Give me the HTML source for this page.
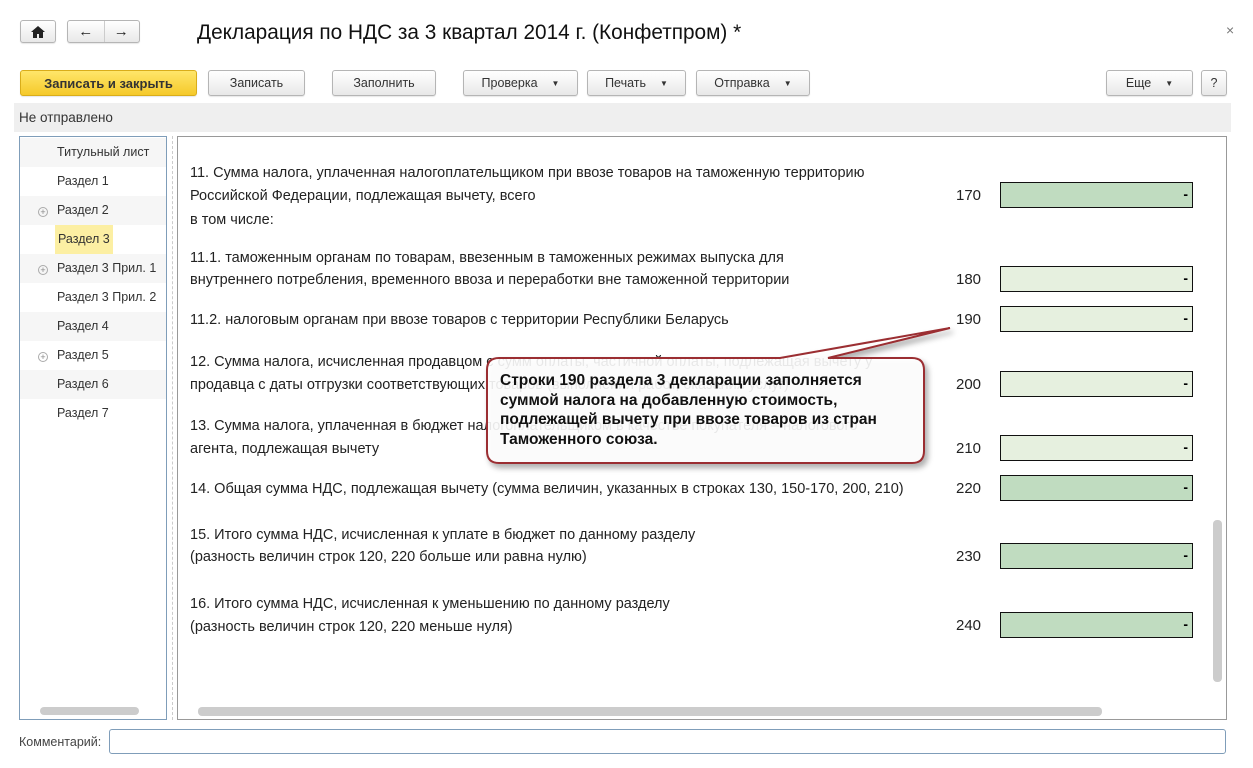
<!DOCTYPE html>
<html><head><meta charset="utf-8"><style>
*{box-sizing:border-box;margin:0;padding:0}
body{width:1253px;height:768px;background:#fff;font-family:"Liberation Sans",Arial,sans-serif;color:#333;position:relative;overflow:hidden}
.a{position:absolute}
.btn{position:absolute;height:26px;border:1px solid #b5b5b5;border-radius:3px;background:linear-gradient(#fff,#e8e8e8);font-size:12.5px;color:#333;display:flex;align-items:center;justify-content:center;box-shadow:0 1px 1px rgba(0,0,0,.1)}
.tri{font-size:8px;margin-left:14px}
.t{position:absolute;font-size:14.5px;color:#222;white-space:nowrap}
.n{position:absolute;left:956px;font-size:15px;color:#222}
.f{position:absolute;left:1000px;width:193px;height:26px;border:1px solid #111;text-align:right;padding-right:4px;font-weight:bold;font-size:14px;line-height:22px;color:#000}
.d{background:#c0dcc0}.l{background:#e6f0df}
.li{position:absolute;left:20px;width:146px;height:29px;font-size:12.5px;color:#333;line-height:29px;padding-left:37px}
.pl{position:absolute;left:18px;top:11px;width:10px;height:10px;border:1px solid #aaa;border-radius:50%;font-size:9px;line-height:8px;text-align:center;color:#888;padding:0}
</style></head><body>
<div class="btn" style="left:20px;top:20px;width:36px;height:23px"><svg width="14" height="12" viewBox="0 0 14 12"><path d="M7 0L0 6h2v6h4V8h2v4h4V6h2z" fill="#222"/></svg></div>
<div class="btn" style="left:67px;top:20px;width:73px;height:23px;justify-content:space-around"><span style="font-size:15px;font-weight:bold;color:#222">&#8592;</span><span style="position:absolute;left:36px;top:0;bottom:0;border-left:1px solid #ccc"></span><span style="font-size:15px;font-weight:bold;color:#222">&#8594;</span></div>
<div class="a" style="left:197px;top:21px;font-size:20.8px;color:#111">Декларация по НДС за 3 квартал 2014 г. (Конфетпром) *</div>
<div class="a" style="left:1226px;top:22px;font-size:14px;color:#777">×</div>
<div class="btn" style="left:20px;top:70px;width:177px;background:linear-gradient(#ffe66a,#f5c92a);border-color:#d9ad1a;font-weight:bold;color:#333;font-size:13px">Записать и закрыть</div>
<div class="btn" style="left:208px;top:70px;width:97px">Записать</div>
<div class="btn" style="left:332px;top:70px;width:104px">Заполнить</div>
<div class="btn" style="left:463px;top:70px;width:115px">Проверка<span class="tri">▼</span></div>
<div class="btn" style="left:587px;top:70px;width:99px">Печать<span class="tri">▼</span></div>
<div class="btn" style="left:696px;top:70px;width:114px">Отправка<span class="tri">▼</span></div>
<div class="btn" style="left:1106px;top:70px;width:87px">Еще<span class="tri">▼</span></div>
<div class="btn" style="left:1201px;top:70px;width:26px">?</div>
<div class="a" style="left:14px;top:103px;width:1217px;height:29px;background:#efefef;font-size:13.5px;line-height:29px;padding-left:5px;color:#333">Не отправлено</div>

<div class="a" style="left:19px;top:136px;width:148px;height:584px;border:1px solid #7f9db9"></div>
<div class="li" style="top:138px;background:#f6f6f6">Титульный лист</div>
<div class="li" style="top:167px">Раздел 1</div>
<div class="li" style="top:196px;background:#f6f6f6"><span class="pl">+</span>Раздел 2</div>
<div class="li" style="top:225px;padding-left:0"><span style="display:inline-block;margin-left:35px;background:#fcefa3;padding:0 3px">Раздел 3</span></div>
<div class="li" style="top:254px;background:#f6f6f6"><span class="pl">+</span>Раздел 3 Прил. 1</div>
<div class="li" style="top:283px">Раздел 3 Прил. 2</div>
<div class="li" style="top:312px;background:#f6f6f6">Раздел 4</div>
<div class="li" style="top:341px"><span class="pl">+</span>Раздел 5</div>
<div class="li" style="top:370px;background:#f6f6f6">Раздел 6</div>
<div class="li" style="top:399px">Раздел 7</div>
<div class="a" style="left:40px;top:707px;width:99px;height:8px;border-radius:4px;background:#ccc"></div>
<div class="a" style="left:172px;top:136px;height:584px;border-left:1px dashed #ccc"></div>

<div class="a" style="left:177px;top:136px;width:1050px;height:584px;border:1px solid #999"></div>
<div class="a" style="left:198px;top:707px;width:904px;height:9px;border-radius:4px;background:#ccc"></div>
<div class="a" style="left:1213px;top:520px;width:9px;height:162px;border-radius:4px;background:#ccc"></div>

<div class="t" style="left:190px;top:165px">11. Сумма налога, уплаченная налогоплательщиком при ввозе товаров на таможенную территорию</div>
<div class="t" style="left:190px;top:188px">Российской Федерации, подлежащая вычету, всего</div>
<div class="t" style="left:190px;top:212px">в том числе:</div>
<div class="t" style="left:190px;top:250px">11.1. таможенным органам по товарам, ввезенным в таможенных режимах выпуска для</div>
<div class="t" style="left:190px;top:272px">внутреннего потребления, временного ввоза и переработки вне таможенной территории</div>
<div class="t" style="left:190px;top:312px">11.2. налоговым органам при ввозе товаров с территории Республики Беларусь</div>
<div class="t" style="left:190px;top:354px">12. Сумма налога, исчисленная продавцом с сумм оплаты, частичной оплаты, подлежащая вычету у</div>
<div class="t" style="left:190px;top:377px">продавца с даты отгрузки соответствующих товаров (выполнения работ, оказания услуг)</div>
<div class="t" style="left:190px;top:418px">13. Сумма налога, уплаченная в бюджет налогоплательщиком в качестве покупателя – налогового</div>
<div class="t" style="left:190px;top:441px">агента, подлежащая вычету</div>
<div class="t" style="left:190px;top:481px">14. Общая сумма НДС, подлежащая вычету (сумма величин, указанных в строках 130, 150-170, 200, 210)</div>
<div class="t" style="left:190px;top:527px">15. Итого сумма НДС, исчисленная к уплате в бюджет по данному разделу</div>
<div class="t" style="left:190px;top:549px">(разность величин строк 120, 220 больше или равна нулю)</div>
<div class="t" style="left:190px;top:596px">16. Итого сумма НДС, исчисленная к уменьшению по данному разделу</div>
<div class="t" style="left:190px;top:619px">(разность величин строк 120, 220 меньше нуля)</div>

<div class="n" style="top:187px">170</div><div class="f d" style="top:182px">-</div>
<div class="n" style="top:271px">180</div><div class="f l" style="top:266px">-</div>
<div class="n" style="top:311px">190</div><div class="f l" style="top:306px">-</div>
<div class="n" style="top:376px">200</div><div class="f l" style="top:371px">-</div>
<div class="n" style="top:440px">210</div><div class="f l" style="top:435px">-</div>
<div class="n" style="top:480px">220</div><div class="f d" style="top:475px">-</div>
<div class="n" style="top:548px">230</div><div class="f d" style="top:543px">-</div>
<div class="n" style="top:617px">240</div><div class="f d" style="top:612px">-</div>

<svg class="a" style="left:0;top:0" width="1253" height="768">
<defs><filter id="s" x="-10%" y="-10%" width="130%" height="140%"><feDropShadow dx="3" dy="4" stdDeviation="3" flood-opacity="0.35"/></filter></defs>
<path d="M499 358 H780 L950 328 L828 358 H912 Q924 358 924 370 V451 Q924 463 912 463 H499 Q487 463 487 451 V370 Q487 358 499 358Z" fill="rgba(255,255,255,0.88)" stroke="#9b2d30" stroke-width="2" filter="url(#s)"/>
</svg>
<div class="a" style="left:500px;top:371px;font-size:15.5px;font-weight:bold;color:#111;line-height:19.5px;white-space:nowrap">Строки 190 раздела 3 декларации заполняется<br>суммой налога на добавленную стоимость,<br>подлежащей вычету при ввозе товаров из стран<br>Таможенного союза.</div>

<div class="a" style="left:19px;top:735px;font-size:12.5px;color:#444">Комментарий:</div>
<div class="a" style="left:109px;top:729px;width:1117px;height:25px;border:1px solid #7f9db9;border-radius:3px"></div>
</body></html>
